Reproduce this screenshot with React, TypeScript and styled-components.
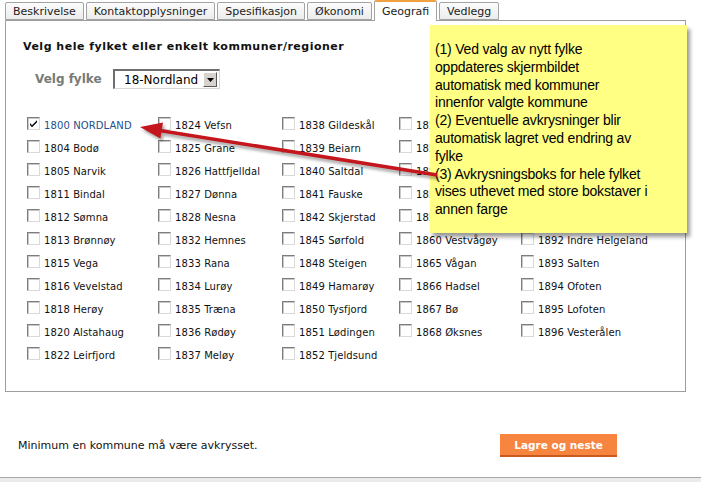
import styled, { createGlobalStyle } from "styled-components";

const GlobalStyle = createGlobalStyle`
  html, body {
    margin: 0;
    padding: 0;
    background: #fff;
    font-family: "DejaVu Sans", Verdana, sans-serif;
    color: #000;
  }
`;

const tabs = ["Beskrivelse", "Kontaktopplysninger", "Spesifikasjon", "Økonomi", "Geografi", "Vedlegg"];

type Kommune = { label: string; checked?: boolean; county?: boolean };

const columns: { width: number; items: Kommune[] }[] = [
  {
    width: 131,
    items: [
      { label: "1800 NORDLAND", checked: true, county: true },
      { label: "1804 Bodø" },
      { label: "1805 Narvik" },
      { label: "1811 Bindal" },
      { label: "1812 Sømna" },
      { label: "1813 Brønnøy" },
      { label: "1815 Vega" },
      { label: "1816 Vevelstad" },
      { label: "1818 Herøy" },
      { label: "1820 Alstahaug" },
      { label: "1822 Leirfjord" },
    ],
  },
  {
    width: 124,
    items: [
      { label: "1824 Vefsn" },
      { label: "1825 Grane" },
      { label: "1826 Hattfjelldal" },
      { label: "1827 Dønna" },
      { label: "1828 Nesna" },
      { label: "1832 Hemnes" },
      { label: "1833 Rana" },
      { label: "1834 Lurøy" },
      { label: "1835 Træna" },
      { label: "1836 Rødøy" },
      { label: "1837 Meløy" },
    ],
  },
  {
    width: 117,
    items: [
      { label: "1838 Gildeskål" },
      { label: "1839 Beiarn" },
      { label: "1840 Saltdal" },
      { label: "1841 Fauske" },
      { label: "1842 Skjerstad" },
      { label: "1845 Sørfold" },
      { label: "1848 Steigen" },
      { label: "1849 Hamarøy" },
      { label: "1850 Tysfjord" },
      { label: "1851 Lødingen" },
      { label: "1852 Tjeldsund" },
    ],
  },
  {
    width: 122,
    items: [
      { label: "1853 Evenes" },
      { label: "1854 Ballangen" },
      { label: "1856 Røst" },
      { label: "1857 Værøy" },
      { label: "1859 Flakstad" },
      { label: "1860 Vestvågøy" },
      { label: "1865 Vågan" },
      { label: "1866 Hadsel" },
      { label: "1867 Bø" },
      { label: "1868 Øksnes" },
    ],
  },
  {
    width: 150,
    items: [
      { label: "1870 Sortland" },
      { label: "1871 Andøy" },
      { label: "1874 Moskenes" },
      { label: "1890 Sør-Helgeland" },
      { label: "1891 Helgeland" },
      { label: "1892 Indre Helgeland" },
      { label: "1893 Salten" },
      { label: "1894 Ofoten" },
      { label: "1895 Lofoten" },
      { label: "1896 Vesterålen" },
    ],
  },
];

const noteLines = [
  "(1) Ved valg av nytt fylke",
  "oppdateres skjermbildet",
  "automatisk med kommuner",
  "innenfor valgte kommune",
  "(2) Eventuelle avkrysninger blir",
  "automatisk lagret ved endring av",
  "fylke",
  "(3) Avkrysningsboks for hele fylket",
  "vises uthevet med store bokstaver i",
  "annen farge",
];

export default function App(): JSX.Element {
  return (
    <Screen>
      <GlobalStyle />
      <Page>
        <TabBar>
          {tabs.map((t) => (
            <Tab key={t} $active={t === "Geografi"}>
              {t}
            </Tab>
          ))}
        </TabBar>

        <Panel>
          <Heading>Velg hele fylket eller enkelt kommuner/regioner</Heading>
          <SelectRow>
            <SelectLabel>Velg fylke</SelectLabel>
            <Select>
              <span>18-Nordland</span>
              <DropButton>
                <svg width="7" height="4" viewBox="0 0 7 4">
                  <path d="M0 0h7L3.5 4z" fill="#000" />
                </svg>
              </DropButton>
            </Select>
          </SelectRow>

          <Columns>
            {columns.map((col, i) => (
              <Column key={i} $width={col.width}>
                {col.items.map((k) => (
                  <Item key={k.label}>
                    <Check $checked={k.checked}>
                      {k.checked && (
                        <svg width="9" height="9" viewBox="0 0 9 9">
                          <path d="M1 4l2 2.2L8 1.2v2L3 8.2 1 6z" fill="#000" />
                        </svg>
                      )}
                    </Check>
                    <Label $county={k.county}>{k.label}</Label>
                  </Item>
                ))}
              </Column>
            ))}
          </Columns>
        </Panel>

        <BottomBar>
          <Hint>Minimum en kommune må være avkrysset.</Hint>
          <SaveButton>Lagre og neste</SaveButton>
        </BottomBar>
      </Page>
      <Footer />

      <Note>
        {noteLines.map((l) => (
          <NoteLine key={l}>{l}</NoteLine>
        ))}
      </Note>

      <Arrow width="701" height="482" viewBox="0 0 701 482">
        <defs>
          <filter id="arrowShadow" x="-10%" y="-50%" width="120%" height="200%">
            <feGaussianBlur stdDeviation="1.6" />
          </filter>
        </defs>
        <g filter="url(#arrowShadow)" opacity="0.35" transform="translate(2 3)">
          <line x1="437" y1="175" x2="158" y2="130.2" stroke="#000" strokeWidth="3.5" />
          <polygon points="140,127 163,122.6 160.4,138.4" fill="#000" />
        </g>
        <line x1="437" y1="175" x2="158" y2="130.2" stroke="#c3171d" strokeWidth="3.5" />
        <polygon points="140,127 163,122.6 160.4,138.4" fill="#c3171d" />
      </Arrow>
    </Screen>
  );
}

const Screen = styled.div`
  position: relative;
  width: 701px;
  height: 482px;
  overflow: hidden;
`;

const Page = styled.div`
  padding-left: 5px;
`;

const TabBar = styled.div`
  display: flex;
  align-items: flex-end;
  gap: 2px;
  height: 20px;
`;

const Tab = styled.div<{ $active?: boolean }>`
  position: relative;
  z-index: ${(p) => (p.$active ? 2 : 1)};
  box-sizing: border-box;
  height: ${(p) => (p.$active ? "21px" : "18px")};
  margin-bottom: ${(p) => (p.$active ? "-1px" : "0")};
  padding: 0 7px;
  display: flex;
  align-items: center;
  font-size: 11px;
  color: #222;
  border: 1px solid #a3a3a3;
  border-bottom: ${(p) => (p.$active ? "none" : "1px solid #a3a3a3")};
  border-top: ${(p) => (p.$active ? "2px solid #f2a141" : "1px solid #a3a3a3")};
  border-radius: 2px 2px 0 0;
  background: ${(p) => (p.$active ? "#fff" : "linear-gradient(#fcfcfc, #ececec)")};
  padding-top: ${(p) => (p.$active ? "0" : "1px")};
`;

const Panel = styled.div`
  box-sizing: border-box;
  width: 681px;
  border: 1px solid #9d9d9d;
  padding: 19px 16px 24px 17px;
`;

const Heading = styled.h2`
  margin: 0;
  font-size: 11px;
  letter-spacing: 0.5px;
  line-height: 14px;
  font-weight: bold;
  color: #111;
`;

const SelectRow = styled.div`
  display: flex;
  align-items: center;
  margin-top: 15px;
  padding-left: 12px;
  height: 20px;
`;

const SelectLabel = styled.span`
  width: 78px;
  font-size: 12px;
  font-weight: bold;
  color: #767b76;
`;

const Select = styled.div`
  box-sizing: border-box;
  width: 107px;
  height: 20px;
  display: flex;
  align-items: center;
  justify-content: space-between;
  padding: 0 2px 0 9px;
  font-size: 12px;
  border-top: 2px solid #6f6f6f;
  border-left: 2px solid #6f6f6f;
  border-right: 1px solid #d8d8d8;
  border-bottom: 1px solid #d8d8d8;
  background: #fff;
`;

const DropButton = styled.span`
  box-sizing: border-box;
  width: 14px;
  height: 15px;
  display: flex;
  align-items: center;
  justify-content: center;
  background: #d6d3ce;
  border-top: 1px solid #fff;
  border-left: 1px solid #fff;
  border-right: 1px solid #5a5a5a;
  border-bottom: 1px solid #5a5a5a;
`;

const Columns = styled.div`
  display: flex;
  margin-top: 25px;
  margin-left: 4px;
`;

const Column = styled.div<{ $width: number }>`
  display: flex;
  flex-direction: column;
  width: ${(p) => p.$width}px;
  flex-shrink: 0;
`;

const Item = styled.div`
  display: flex;
  align-items: center;
  gap: 4px;
  height: 23px;
  white-space: nowrap;
`;

const Check = styled.span<{ $checked?: boolean }>`
  box-sizing: border-box;
  width: 13px;
  height: 13px;
  margin-top: -4px;
  display: flex;
  align-items: center;
  justify-content: center;
  background: #fff;
  border-top: 1px solid #7d7d7d;
  border-left: 1px solid #7d7d7d;
  border-right: 1px solid #d9d9d9;
  border-bottom: 1px solid #d9d9d9;
  box-shadow: inset 1px 1px 0 #c8c8c8;
`;

const Label = styled.span<{ $county?: boolean }>`
  font-size: 10px;
  letter-spacing: 0.1px;
  color: ${(p) => (p.$county ? "#1d4f8c" : "#111")};
`;

const BottomBar = styled.div`
  box-sizing: border-box;
  width: 612px;
  height: 23px;
  margin-top: 42px;
  padding-left: 13px;
  display: flex;
  align-items: center;
  justify-content: space-between;
`;

const Hint = styled.span`
  font-size: 11px;
  color: #111;
`;

const SaveButton = styled.button`
  box-sizing: border-box;
  width: 117px;
  height: 23px;
  border: none;
  border-bottom: 2px solid #c9591f;
  background: #f7843f;
  color: #fff;
  font-family: "DejaVu Sans", Verdana, sans-serif;
  font-size: 10.5px;
  font-weight: bold;
  padding: 0;
  cursor: pointer;
`;

const Footer = styled.div`
  margin-top: 20px;
  height: 10px;
  border-top: 1px solid #a7a7a7;
  background: #ebebeb;
`;

const Note = styled.div`
  position: absolute;
  left: 430px;
  top: 25px;
  box-sizing: border-box;
  width: 257px;
  height: 208px;
  padding: 16px 0 0 5px;
  background: #ffff84;
  box-shadow: 3px 4px 4px rgba(0, 0, 0, 0.4);
  font-family: "Liberation Sans", Arial, sans-serif;
  font-size: 14px;
  line-height: 17.8px;
  color: #000;
`;

const NoteLine = styled.div`
  white-space: nowrap;
  letter-spacing: -0.2px;
`;

const Arrow = styled.svg`
  position: absolute;
  left: 0;
  top: 0;
  pointer-events: none;
`;
